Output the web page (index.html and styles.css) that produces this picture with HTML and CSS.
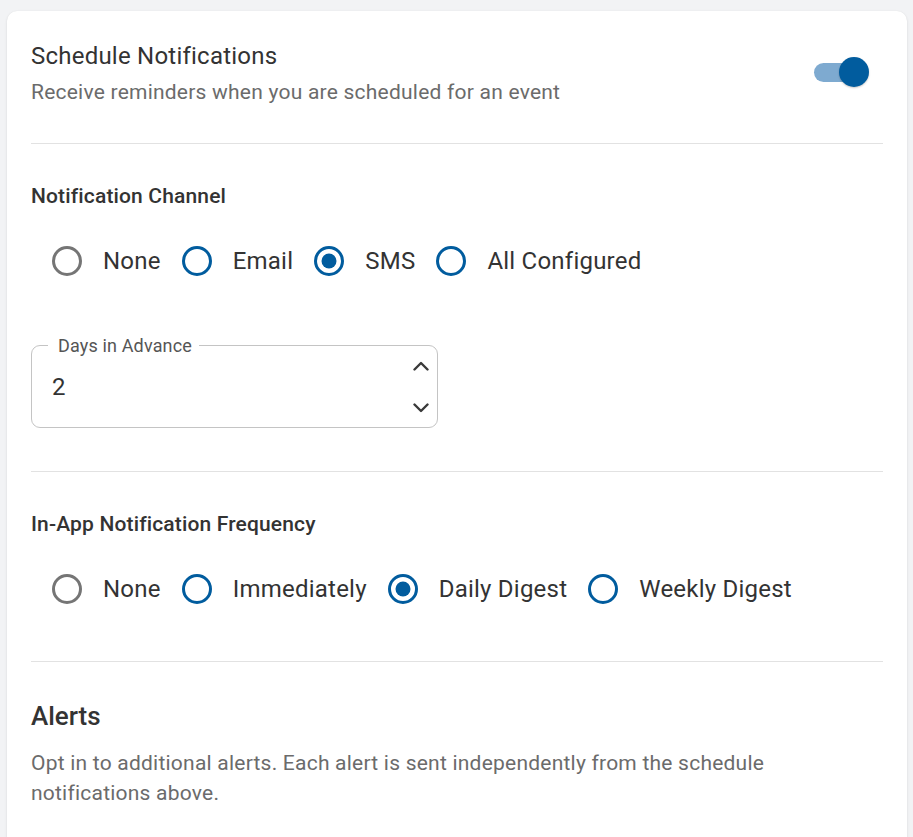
FILE: index.html
```html
<!DOCTYPE html>
<html lang="en">
<head>
<meta charset="utf-8">
<title>Notification Settings</title>
<link rel="stylesheet" href="styles.css">
</head>
<body>
<div class="card">
  <section class="header">
    <div class="header-text">
      <div class="title">Schedule Notifications</div>
      <div class="subtitle">Receive reminders when you are scheduled for an event</div>
    </div>
    <span class="switch" role="switch" aria-checked="true">
      <span class="track"></span>
      <span class="thumb"></span>
    </span>
  </section>

  <div class="divider"></div>

  <section class="group">
    <div class="group-label">Notification Channel</div>
    <div class="radio-row">
      <label class="radio-option">
        <svg class="radio-icon neutral" viewBox="0 0 20 20" width="30" height="30"><circle cx="10" cy="10" r="9" fill="none" stroke-width="2"/></svg>
        <span class="radio-label">None</span>
      </label>
      <label class="radio-option">
        <svg class="radio-icon" viewBox="0 0 20 20" width="30" height="30"><circle cx="10" cy="10" r="9" fill="none" stroke-width="2"/></svg>
        <span class="radio-label">Email</span>
      </label>
      <label class="radio-option">
        <svg class="radio-icon" viewBox="0 0 20 20" width="30" height="30"><circle cx="10" cy="10" r="9" fill="none" stroke-width="2"/><circle class="dot" cx="10" cy="10" r="5"/></svg>
        <span class="radio-label">SMS</span>
      </label>
      <label class="radio-option">
        <svg class="radio-icon" viewBox="0 0 20 20" width="30" height="30"><circle cx="10" cy="10" r="9" fill="none" stroke-width="2"/></svg>
        <span class="radio-label">All Configured</span>
      </label>
    </div>

    <div class="field">
      <span class="field-label">Days in Advance</span>
      <span class="field-value">2</span>
      <span class="spinner">
        <svg viewBox="0 0 16 10" width="16" height="10"><path d="M1.5 8.5 L8 2 L14.5 8.5" fill="none" stroke-width="2.4" stroke-linecap="round" stroke-linejoin="round"/></svg>
        <svg viewBox="0 0 16 10" width="16" height="10"><path d="M1.5 1.5 L8 8 L14.5 1.5" fill="none" stroke-width="2.4" stroke-linecap="round" stroke-linejoin="round"/></svg>
      </span>
    </div>
  </section>

  <div class="divider divider-after-field"></div>

  <section class="group">
    <div class="group-label">In-App Notification Frequency</div>
    <div class="radio-row">
      <label class="radio-option">
        <svg class="radio-icon neutral" viewBox="0 0 20 20" width="30" height="30"><circle cx="10" cy="10" r="9" fill="none" stroke-width="2"/></svg>
        <span class="radio-label">None</span>
      </label>
      <label class="radio-option">
        <svg class="radio-icon" viewBox="0 0 20 20" width="30" height="30"><circle cx="10" cy="10" r="9" fill="none" stroke-width="2"/></svg>
        <span class="radio-label">Immediately</span>
      </label>
      <label class="radio-option">
        <svg class="radio-icon" viewBox="0 0 20 20" width="30" height="30"><circle cx="10" cy="10" r="9" fill="none" stroke-width="2"/><circle class="dot" cx="10" cy="10" r="5"/></svg>
        <span class="radio-label">Daily Digest</span>
      </label>
      <label class="radio-option">
        <svg class="radio-icon" viewBox="0 0 20 20" width="30" height="30"><circle cx="10" cy="10" r="9" fill="none" stroke-width="2"/></svg>
        <span class="radio-label">Weekly Digest</span>
      </label>
    </div>
  </section>

  <div class="divider divider-after-radios"></div>

  <section class="alerts">
    <h2 class="alerts-title">Alerts</h2>
    <p class="alerts-text">Opt in to additional alerts. Each alert is sent independently from the schedule notifications above.</p>
  </section>
</div>
</body>
</html>
```

FILE: styles.css
```css
* {
  box-sizing: border-box;
}

html, body {
  margin: 0;
  padding: 0;
}

body {
  background: #f2f3f5;
  font-family: Roboto, "Noto Sans", "Liberation Sans", sans-serif;
  color: #333333;
  padding: 11px 6px 0 7px;
  overflow: hidden;
}

.card {
  width: 900px;
  background: #ffffff;
  border-radius: 10px;
  box-shadow: 0 1px 3px rgba(0, 0, 0, 0.10), 0 0 1px rgba(0, 0, 0, 0.06);
  padding: 27px 24px 60px 24px;
}

/* Header */
.header {
  display: flex;
  align-items: center;
  justify-content: space-between;
}

.title {
  font-size: 24px;
  line-height: 36px;
  letter-spacing: 0.225px;
  color: #333333;
}

.subtitle {
  margin-top: 3px;
  font-size: 21px;
  line-height: 30px;
  letter-spacing: 0.225px;
  color: #6b6b6b;
}

.switch {
  display: flex;
  align-items: center;
  margin-right: 14px;
  margin-top: -1px;
}

.track {
  width: 50px;
  height: 19px;
  border-radius: 10px;
  background: #7eaad0;
}

.thumb {
  width: 30px;
  height: 30px;
  border-radius: 50%;
  background: #015c9e;
  margin-left: -25px;
  box-shadow: 0 1px 2px rgba(0, 0, 0, 0.22);
}

/* Divider */
.divider {
  height: 1px;
  background: #e2e2e2;
  margin-top: 36px;
}

.divider-after-field {
  margin-top: 43px;
}

.divider-after-radios {
  margin-top: 41px;
}

/* Groups */
.group-label {
  margin-top: 36px;
  font-size: 21px;
  line-height: 33px;
  font-weight: 500;
  letter-spacing: 0.15px;
  color: #333333;
}

.radio-row {
  margin-top: 16px;
  height: 63px;
  display: flex;
  align-items: center;
  padding-left: 21px;
}

.radio-option {
  display: flex;
  align-items: center;
  gap: 21px;
  margin-right: 21px;
}

.radio-icon {
  display: block;
  stroke: #015c9e;
  flex-shrink: 0;
}

.radio-icon.neutral {
  stroke: #757575;
}

.radio-icon .dot {
  fill: #015c9e;
  stroke: none;
}

.radio-label {
  font-size: 24px;
  line-height: 36px;
  letter-spacing: 0.225px;
  color: #333333;
}

/* Number field */
.field {
  position: relative;
  margin-top: 53px;
  width: 407px;
  height: 83px;
  border: 1px solid #c4c4c4;
  border-radius: 9px;
  display: flex;
  align-items: center;
  justify-content: space-between;
  padding: 0 8px 0 20px;
}

.field-label {
  position: absolute;
  top: -11px;
  left: 16px;
  padding: 0 7px 0 10px;
  background: #ffffff;
  font-size: 18px;
  line-height: 22px;
  letter-spacing: 0.15px;
  color: #555555;
}

.field-value {
  font-size: 24px;
  line-height: 36px;
  color: #333333;
}

.spinner {
  display: flex;
  flex-direction: column;
  justify-content: space-between;
  height: 52px;
  stroke: #3a3a3a;
}

.spinner svg {
  display: block;
}

/* Alerts */
.alerts-title {
  margin: 34px 0 0 0;
  font-size: 26px;
  line-height: 40px;
  font-weight: 500;
  color: #333333;
}

.alerts-text {
  margin: 12px 0 0 0;
  font-size: 21px;
  line-height: 30px;
  letter-spacing: 0.225px;
  color: #6b6b6b;
}
```
